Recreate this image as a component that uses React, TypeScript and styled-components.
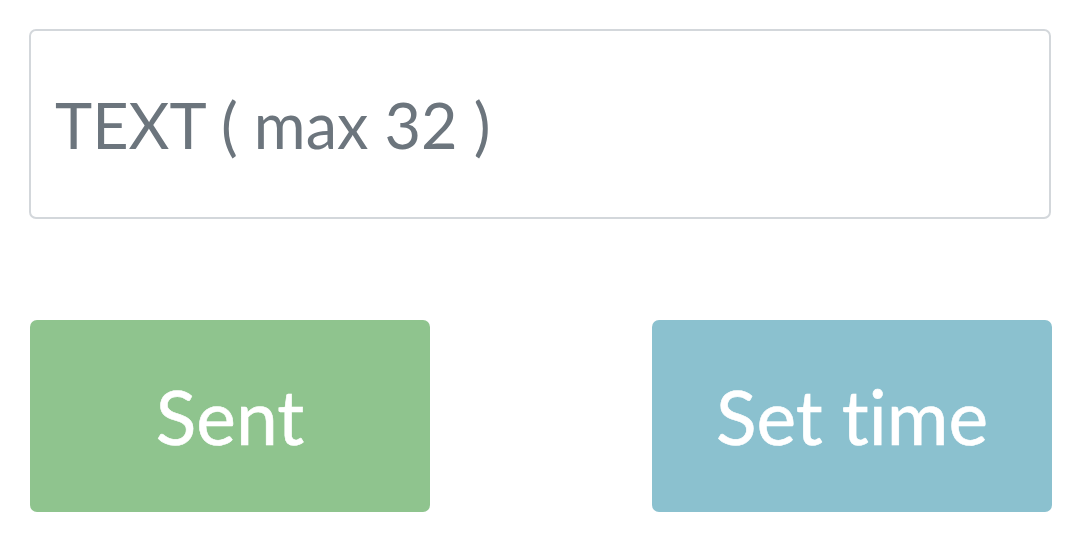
import React from "react";
import styled, { createGlobalStyle } from "styled-components";

const Global = createGlobalStyle`
  html, body { margin: 0; padding: 0; background: #ffffff; }
  body { font-family: Lato, "Open Sans", sans-serif; }
`;

const Page = styled.div`
  width: 1082px;
  height: 552px;
  box-sizing: border-box;
  padding: 29px 30px 0 29px;
  display: flex;
  flex-direction: column;
  gap: 101px;
`;

const TextInput = styled.input`
  box-sizing: border-box;
  width: 1022px;
  height: 190px;
  border: 2px solid #d3d7db;
  border-radius: 7px;
  padding: 0 0 0 24px;
  font-family: Lato, "Open Sans", sans-serif;
  font-size: 63px;
  color: #495057;
  background: #fff;
  outline: none;
  font-variant-ligatures: none;
  &::placeholder { color: #6c757d; opacity: 1; }
`;

const ButtonRow = styled.div`
  display: flex;
  justify-content: space-between;
  padding-left: 1px;
`;

const ActionButton = styled.button<{ $bg: string }>`
  width: 400px;
  height: 192px;
  border: none;
  border-radius: 7px;
  background: ${(p) => p.$bg};
  color: #ffffff;
  font-family: Lato, "Open Sans", sans-serif;
  font-size: 75px;
  font-variant-ligatures: none;
  -webkit-text-stroke: 0.6px #ffffff;
  padding: 0;
  cursor: pointer;
`;

export default function App() {
  return (
    <>
      <Global />
      <Page>
        <TextInput placeholder="TEXT ( max 32 )" />
        <ButtonRow>
          <ActionButton $bg="#8fc48e">Sent</ActionButton>
          <ActionButton $bg="#8bc1cf">Set time</ActionButton>
        </ButtonRow>
      </Page>
    </>
  );
}
